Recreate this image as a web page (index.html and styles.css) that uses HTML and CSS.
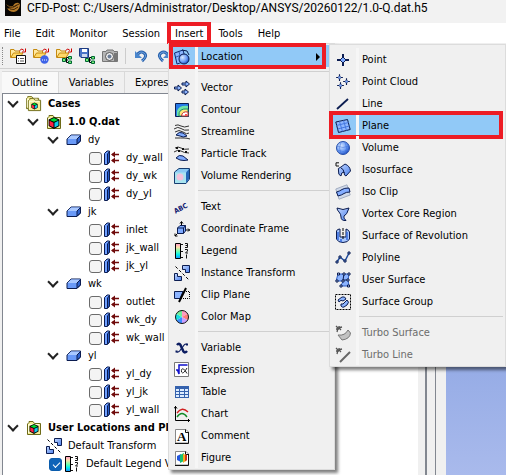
FILE: index.html
```
<!DOCTYPE html>
<html lang="en">
<head>
<meta charset="utf-8">
<title>CFD-Post</title>
<link rel="stylesheet" href="styles.css">
</head>

<body>

<!-- shared icons -->
<svg class="defs" width="0" height="0">
	<linearGradient id="rainbow" x1="0" y1="0" x2="0" y2="1">
		<stop offset="0" stop-color="#f9c"/><stop offset=".25" stop-color="#fda"/><stop offset=".5" stop-color="#7fa"/><stop offset=".75" stop-color="#0ee"/><stop offset="1" stop-color="#28f"/>
	</linearGradient>
	<linearGradient id="blue" x1="0" y1="0" x2="1" y2="1">
		<stop offset="0" stop-color="#c5d9ff"/><stop offset="1" stop-color="#4a80ee"/>
	</linearGradient>
	<radialGradient id="ball" cx=".35" cy=".35" r=".7">
		<stop offset="0" stop-color="#d8e8ff"/><stop offset=".6" stop-color="#6d9df5"/><stop offset="1" stop-color="#1c4cc0"/>
	</radialGradient>
	<symbol id="cube" viewBox="0 0 10 10">
		<path d="M5 0L9.500 2V7.500L5 10L.5 7.500V2Z" fill="#000"/>
		<path d="M5 .8L8.500 2.400L5 4L1.500 2.400Z" fill="#0d3"/><path d="M1.300 3.200L4.600 4.700V8.800L1.300 7Z" fill="#f24"/><path d="M5.400 4.700L8.700 3.200V7L5.400 8.800Z" fill="#1ce"/>
	</symbol>
	<symbol id="folder" viewBox="0 0 16 16">
		<path d="M1.500 14.500V4L3 2.500V1.500H7L8.500 3.500H14.500V14.500Z" fill="#f5ee96" stroke="#6d6a18"/>
		<path d="M2.500 13V4.500H13" fill="none" stroke="#fffde0"/>
	</symbol>
	<symbol id="open" viewBox="0 0 16 16">
		<path d="M.5 9.500V1.500H4L5 3H9.500V5" fill="#ffe9a0" stroke="#c58a10"/>
		<path d="M.8 9.500L3.500 5H13L10 9.500Z" fill="#ffd968" stroke="#c58a10"/>
		<path d="M9.500 2.500Q12 -.5 14 2.500M15.500 .5V4H12" fill="none" stroke="#c00"/>
	</symbol>
	<symbol id="nodes" viewBox="0 0 10 8">
		<path d="M3 4H6M4.500 4V1.500H6M4.500 4V6.500H6" fill="none" stroke="#000"/>
		<path d="M.5 2.500H3.500V5.500H.5ZM6.500 .5H9.500V3H6.500ZM6.500 5H9.500V7.500H6.500Z" fill="#7e7" stroke="#063"/>
	</symbol>
	<symbol id="box" viewBox="0 0 16 16">
		<path d="M1 7L5 3H14.500V9L11 12.500H1Z" fill="#6a9af8" stroke="#0b1c50"/><path d="M1.500 7L5 3.500H14L11 7Z" fill="#a9c8ff"/><path d="M11 12V7L14.500 3.500V9Z" fill="#2f62cc" stroke="#0b1c50"/>
	</symbol>
	<symbol id="bound" viewBox="0 0 16 16">
		<path d="M.5 3.500L3 1H5.500V12L3.500 14.500H.5Z" fill="#6f9fff" stroke="#0b1c50"/><path d="M3.500 14V4L5.500 1.500V12Z" fill="#245ac8" stroke="#0b1c50"/>
		<path d="M8 4.500H15M8 10.500H15" stroke="#700b0b" stroke-width="1.500"/><path d="M7 4.500L11 1.500V7.500ZM7 10.500L11 7.500V13.500Z" fill="#700b0b"/>
	</symbol>
	<symbol id="legend" viewBox="0 0 16 16">
		<path d="M1.500 .5H6.500V15.500H1.500Z" fill="url(#rainbow)" stroke="#000"/>
		<path d="M7 1.500H9M7 8.500H9M7 14.500H9M11 .5H13.500V4.500H11M11.500 2.500H13M11 6.500H13.500V8L11.500 10H14M12.500 11.500V15.500" fill="none" stroke="#111"/>
	</symbol>
	<symbol id="transform" viewBox="0 0 16 16">
		<path d="M8.500 .5H15.500V7.500H11.500V4.500H8.500Z" fill="url(#blue)" stroke="#0b1c50"/>
		<path d="M.5 8.500H3.500V11.500H7.500V15.500H.5Z" fill="url(#blue)" stroke="#0b1c50"/>
		<path d="M1.500 1.500L15 15" stroke="#000" stroke-dasharray="3 2"/>
	</symbol>
	<symbol id="page" viewBox="0 0 16 16">
		<path d="M1.500 1.500H12L14.500 4V15H1.500Z" fill="#fff" stroke="#888"/><path d="M14.500 4V15.500H1M11.500 1.500V4.500H14.500" fill="none" stroke="#111"/>
	</symbol>
	<symbol id="diamond" viewBox="0 0 16 16">
		<path d="M8 2V14M2 8H14" stroke="#0b1c50" stroke-width="2"/><path d="M8 5L11 8L8 11L5 8Z" fill="#7eaaff" stroke="#0b1c50"/>
	</symbol>
	<symbol id="fan" viewBox="0 0 8 8">
		<path d="M1 1L3 3L7 2M3 3L2 7M4 3L6 5M1 4H4M4 1V4" fill="none" stroke="#555" stroke-width="1.300"/>
	</symbol>
</svg>

<header class="titlebar">
	<svg class="logo" viewBox="0 0 16 16"><path d="M0 0H16V16H0Z" fill="#080604"/><path d="M1 4Q4 7 8 6Q10 2 14 3L15 5Q14 11 9 12Q4 12 2 8Q4 9 6 8Q3 7 1 4Z" fill="#b47a28"/><path d="M3 6Q7 9 12 5M5 9Q9 11 13 7M8 7L14 4" fill="none" stroke="#3d2408"/></svg>
	<h1>CFD-Post: C:/Users/Administrator/Desktop/ANSYS/20260122/1.0-Q.dat.h5</h1>
</header>

<nav class="menubar">
	<button type="button">File</button>
	<button type="button">Edit</button>
	<button type="button">Monitor</button>
	<button type="button">Session</button>
	<div class="dropdown">
		<button type="button" class="marked" aria-expanded="true">Insert</button>
		<ul class="menu">
			<li class="active">
				<button type="button" class="marked">
					<svg class="icon" viewBox="0 0 16 16"><path d="M.5 4L9 1L12 12L3 15Z" fill="#8db6ff" stroke="#0b2a70"/><path d="M5 3L8 13M2 8L10 5" stroke="#2d5cb8"/><path d="M8 1L13 2L15 6" fill="none" stroke="#0b1c50"/><circle cx="10" cy="10" r="5" fill="url(#ball)" stroke="#0b1c50"/></svg>
					Location <span class="arrow"></span>
				</button>
				<ul class="menu submenu">
					<li><button type="button"><svg class="icon"><use href="#diamond"/></svg>Point</button></li>
					<li><button type="button"><svg class="icon" viewBox="0 0 16 16"><use href="#diamond" x="0" y="-1" width="9" height="9"/><use href="#diamond" x="7" y="3" width="9" height="9"/><use href="#diamond" x="1" y="7" width="9" height="9"/></svg>Point Cloud</button></li>
					<li><button type="button"><svg class="icon" viewBox="0 0 16 16"><path d="M2 13L13 3" stroke="#0b1c50" stroke-width="1.800"/></svg>Line</button></li>
					<li class="active"><button type="button" class="marked"><svg class="icon" viewBox="0 0 16 16"><path d="M.8 4L12.500 1.500L15.200 11.500L3.500 14.500Z" fill="#8eb7ff" stroke="#0b1c50"/><path d="M1.500 7.500L13.500 4.500M2.500 11L14.500 8M4.500 3.500L7.500 13.500M8.500 2.500L11.500 12.500" stroke="#4477e0"/></svg>Plane</button></li>
					<li><button type="button"><svg class="icon" viewBox="0 0 16 16"><circle cx="8" cy="8" r="6.500" fill="url(#ball)" stroke="#2850a8"/><path d="M2 6Q8 9 14 6M2 10Q8 13 14 10M6 2Q3 8 6 14M10 2Q13 8 10 14" fill="none" stroke="#3e70d8" stroke-width=".5"/></svg>Volume</button></li>
					<li><button type="button"><svg class="icon" viewBox="0 0 16 16"><path d="M4 .8H1V4H4" fill="none" stroke="#111"/><path d="M3.500 9Q2 6 6 5L10 2Q15 4 15.500 9L11 14Q9 14 9 10Q6 10 6 14Q3 13 3.500 9Z" fill="url(#blue)" stroke="#0b1c50"/><path d="M6 6Q9 7 9 11" fill="none" stroke="#0b1c50"/></svg>Isosurface</button></li>
					<li><button type="button"><svg class="icon" viewBox="0 0 16 16"><path d="M.8 5L12 .8L15.200 11L4 15.200Z" fill="#cfd9ea" stroke="#a3adc0"/><path d="M1.500 8Q5 7 7 5.500T14 4L15 8Q11 8 9 9.500T3 12Z" fill="#84adff" stroke="#0b1c50"/></svg>Iso Clip</button></li>
					<li><button type="button"><svg class="icon" viewBox="0 0 16 16"><path d="M2 2Q8 5 14 2Q12 9 9 10Q8 12 11 14.500Q6 15 6 11Q6 8 4 6Q2 4 2 2Z" fill="url(#blue)" stroke="#0b1c50"/></svg>Vortex Core Region</button></li>
					<li><button type="button"><svg class="icon" viewBox="0 0 16 16"><path d="M1.500 3Q2 1 5 1V9H11V1Q14 2 14.500 4V11Q13 14.500 8 14.500T1.500 11Z" fill="#a9c8ff" stroke="#0b1c50"/><path d="M3 4V12M12 4V12M6 11V14" stroke="#356ade" stroke-width="1.500"/><path d="M8 0V12" stroke="#000" stroke-dasharray="3 1"/></svg>Surface of Revolution</button></li>
					<li><button type="button"><svg class="icon" viewBox="0 0 16 16"><path d="M2 12L5 7L10 11L14 3" fill="none" stroke="#1e4a9c" stroke-width="1.500"/><path d="M1 11H3V13H1ZM4 6H6V8H4ZM9 10H11V12H9ZM13 2H15V4H13Z" fill="#8cb4ff" stroke="#0b1c50"/></svg>Polyline</button></li>
					<li><button type="button"><svg class="icon" viewBox="0 0 16 16"><path d="M3 2H14L13 8L14 14H6L8 9H1Z" fill="#8cb4ff" stroke="#2c5dc4"/><path d="M9 2L8 8H13" fill="none" stroke="#0b1c50"/><path d="M2.500 1H4.500V3H2.500ZM8 1H10V3H8ZM13 1H15V3H13ZM1 8H3V10H1ZM7 8H9V10H7ZM12 7H14V9H12ZM5 13H7V15H5ZM12.500 13H14.500V15H12.500Z" fill="#d4e3ff" stroke="#0b1c50"/></svg>User Surface</button></li>
					<li><button type="button"><svg class="icon" viewBox="0 0 16 16"><path d="M.5 .5H15.500V15.500H.5Z" fill="none" stroke="#000" stroke-dasharray="2 1"/><path d="M3 6L7 3Q10 2 11 5L8 7Q6 5 4 8ZM6 12Q5 9 8 10L12 6Q15 8 12 11L9 13Q8 14 6 12Z" fill="#8cb4ff" stroke="#0b1c50"/></svg>Surface Group</button></li>
					<li class="separator"></li>
					<li><button type="button" disabled><svg class="icon" viewBox="0 0 16 16"><use href="#fan" width="8" height="8"/><path d="M3 10Q10 11 13 5L15.500 8Q15 14 7 15Z" fill="#c2c2c2" stroke="#777"/></svg>Turbo Surface</button></li>
					<li><button type="button" disabled><svg class="icon" viewBox="0 0 16 16"><use href="#fan" width="8" height="8"/><path d="M5 15L15 5" stroke="#666" stroke-width="2"/></svg>Turbo Line</button></li>
				</ul>
			</li>
			<li class="separator"></li>
			<li><button type="button"><svg class="icon" viewBox="0 0 16 16"><path d="M.5 7H4V5L7.500 8L4 11V9H.5ZM8 3H12V1L15.500 4L12 7V5H8ZM8 11H11V9L14.500 12L11 15V13H8Z" fill="#8cb4ff" stroke="#0b1c50"/></svg>Vector</button></li>
			<li><button type="button"><svg class="icon" viewBox="0 0 16 16"><path d="M1.500 1.500H14.500V14.500H1.500Z" fill="#2479e8" stroke="#0b1c50"/><path d="M3 14V9Q5 3 14 4V14Z" fill="#6ee3a8"/><path d="M5 14Q4 6 14 7V14Z" fill="#ffe87a" stroke="#138b6a"/><path d="M7.500 14Q8 9 14 10V14Z" fill="#fff" stroke="#c03030"/><path d="M11 12H13V14H11Z" fill="#f55"/></svg>Contour</button></li>
			<li><button type="button"><svg class="icon" viewBox="0 0 16 16"><path d="M1 1.500Q4 0 7 2T15 2M0 5Q4 2 7 4.500T15 6M1 8Q5 5 9 8T15 9M1 14Q7 14 10 14T16 15" fill="none" stroke="#333"/><path d="M2 11Q5 7 9 9L13 12Q9 14 6 12Z" fill="#7eaaff" stroke="#0b1c50"/></svg>Streamline</button></li>
			<li><button type="button"><svg class="icon" viewBox="0 0 16 16"><path d="M1 2Q4 0 7 2T15 3M0 6Q4 3 7 5T15 7" fill="none" stroke="#333"/><path d="M2 1H4V3H2ZM8 2H10V4H8ZM4 4H6V6H4ZM11 5H13V7H11Z" fill="#111"/><path d="M2 12Q5 8 9 10L14 14Q10 15 6 14Z" fill="#7eaaff" stroke="#0b1c50"/></svg>Particle Track</button></li>
			<li><button type="button"><svg class="icon" viewBox="0 0 16 16"><path d="M.5 4L5 .5H15.500V11L12 15.500H.5Z" fill="#8ccaf5" stroke="#173d70"/><path d="M1 4.500H12V15H1Z" fill="#a9e4f0"/><path d="M12 4.500L15 1V11L12 15Z" fill="#2466b8"/><circle cx="6" cy="9" r="3.500" fill="#f3c3dc"/></svg>Volume Rendering</button></li>
			<li class="separator"></li>
			<li><button type="button"><svg class="icon abc" viewBox="0 0 16 16"><text x="-1" y="11" transform="rotate(-28 8 8)">ABC</text></svg>Text</button></li>
			<li><button type="button"><svg class="icon" viewBox="0 0 16 16"><path d="M7.500 5V1M12 9H16M4 12L1 15M6 2.500L7.500 .5L9 2.500M14 7.500L15.500 9L14 10.500M1 12.500V15H3.500" fill="none" stroke="#000"/><path d="M3.500 7L6 4.500H11.500V10L9.500 12.500H3.500Z" fill="#7eaaff" stroke="#0b1c50"/><path d="M3.500 7H9.500V12.500M9.500 7L11.500 4.500" fill="none" stroke="#0b1c50"/></svg>Coordinate Frame</button></li>
			<li><button type="button"><svg class="icon"><use href="#legend"/></svg>Legend</button></li>
			<li><button type="button"><svg class="icon"><use href="#transform"/></svg>Instance Transform</button></li>
			<li><button type="button"><svg class="icon" viewBox="0 0 16 16"><path d="M.5 4.500H9L6 11.500H.5Z" fill="#8cb4ff" stroke="#0b1c50"/><path d="M10 4.500H15.500V11.500H7" fill="none" stroke="#000" stroke-dasharray="1 1"/><path d="M5 15L12 1" stroke="#000" stroke-width="2"/></svg>Clip Plane</button></li>
			<li><button type="button"><svg class="icon" viewBox="0 0 16 16"><circle cx="8" cy="8" r="6.500" fill="#fff"/><path d="M8 8V1.500A6.500 6.500 0 0 1 13.600 4.700Z" fill="#ff9ac0"/><path d="M8 8L13.600 4.700A6.500 6.500 0 0 1 13.600 11.300Z" fill="#ff7b7b"/><path d="M8 8L13.600 11.300A6.500 6.500 0 0 1 8 14.500Z" fill="#c6a0ff"/><path d="M8 8V14.500A6.500 6.500 0 0 1 2.400 11.300Z" fill="#3a8cff"/><path d="M8 8L2.400 11.300A6.500 6.500 0 0 1 2.400 4.700Z" fill="#19e0e0"/><path d="M8 8L2.400 4.700A6.500 6.500 0 0 1 8 1.500Z" fill="#70ee98"/><circle cx="8" cy="8" r="6.500" fill="none" stroke="#111"/></svg>Color Map</button></li>
			<li class="separator"></li>
			<li><button type="button"><svg class="icon" viewBox="0 0 16 16"><path d="M3 5Q5 2.500 6.500 5L9.500 11.500Q11 13.500 13 11" fill="none" stroke="#0b1c60" stroke-width="2.500"/><path d="M13 4.500Q11 3 9 6.500L6 10.500Q4 13 2.500 11.500" fill="none" stroke="#0b1c60" stroke-width="1.200"/><path d="M12 3.500H14V5.500H12ZM1.500 10.500H3.500V12.500H1.500Z" fill="#0b1c60"/></svg>Variable</button></li>
			<li><button type="button"><svg class="icon" viewBox="0 0 16 16"><path d="M.5 .5H14.500V14.500H.5Z" fill="#fff" stroke="#777"/><path d="M2 8L3.500 8L5 12V3H13.500" fill="none" stroke="#11c" stroke-width="1.500"/><path d="M13 6Q9 13 7.500 10Q7 6 9.500 7Q11 8 13 11.500" fill="none" stroke="#222"/></svg>Expression</button></li>
			<li><button type="button"><svg class="icon" viewBox="0 0 16 16"><path d="M1 2H15V14H1Z" fill="#3562ad"/><path d="M2 5H5V7H2ZM6 5H10V7H6ZM11 5H14V7H11ZM2 8H5V10H2ZM6 8H10V10H6ZM11 8H14V10H11ZM2 11H5V13H2ZM6 11H10V13H6ZM11 11H14V13H11Z" fill="#dcecff"/></svg>Table</button></li>
			<li><button type="button"><svg class="icon" viewBox="0 0 16 16"><path d="M1.500 0V14.500H16M0 2.500L1.500 .5L3 2.500M14 13L15.500 14.500L14 16" fill="none" stroke="#000"/><path d="M3 7Q8 0 14 6" fill="none" stroke="#d02020" stroke-width="1.300"/><path d="M3 11Q8 4 13 11" fill="none" stroke="#128a28" stroke-width="1.300"/></svg>Chart</button></li>
			<li><button type="button"><svg class="icon comment" viewBox="0 0 16 16"><use href="#page"/><text x="3" y="13">A</text></svg>Comment</button></li>
			<li><button type="button"><svg class="icon" viewBox="0 0 16 16"><use href="#page"/><path d="M3 6L7 4V12L3 10Z" fill="#2255dd"/><path d="M6 5L10 3V11L6 13Z" fill="#18c070"/><path d="M9 4L13 5V10L9 13Z" fill="#f0b020"/><path d="M11 4.500L13 5V10L11 11.500Z" fill="#d83018"/></svg>Figure</button></li>
		</ul>
	</div>
	<button type="button">Tools</button>
	<button type="button">Help</button>
</nav>

<div class="toolbar">
	<span class="grip"></span>
	<button type="button" aria-label="Load results"><svg class="icon" viewBox="0 0 16 16"><use href="#open" width="16" height="16"/><path d="M6.500 7.500H15.500V15.500H6.500Z" fill="#fff" stroke="#111"/><path d="M8 10.500H9M10 10.500H14M8 13H9M10 13H14" stroke="#555"/></svg></button>
	<button type="button" aria-label="Load state"><svg class="icon" viewBox="0 0 16 16"><use href="#open" width="16" height="16"/><circle cx="11.500" cy="11.500" r="4.200" fill="#3d63e8"/><path d="M9 12H10M11 12H12M13 12H14" stroke="#fff"/></svg></button>
	<button type="button" aria-label="Open session"><svg class="icon" viewBox="0 0 16 16"><use href="#open" width="16" height="16"/><use href="#nodes" x="6" y="8" width="10" height="8"/></svg></button>
	<button type="button" aria-label="Save state"><svg class="icon" viewBox="0 0 16 16"><path d="M.5 .5H9.500V9.500H2L.5 8Z" fill="#4a74c8" stroke="#1d3a80"/><path d="M3 1H8V4H3Z" fill="#fff"/><path d="M3 6H8V9H3Z" fill="#cdd8ee"/><use href="#nodes" x="6" y="8" width="10" height="8"/></svg></button>
	<button type="button" aria-label="Snapshot"><svg class="icon" viewBox="0 0 16 16"><path d="M.5 3.500H4L5 2H11L12 3.500H15.500V13.500H.5Z" fill="#b5b5b5" stroke="#777"/><path d="M12 5H15V13H12Z" fill="#777"/><circle cx="7.500" cy="8.500" r="4" fill="#eee" stroke="#555"/><circle cx="7.500" cy="8.500" r="2" fill="#6b7c96"/></svg></button>
	<span class="divider"></span>
	<button type="button" aria-label="Undo"><svg class="icon" viewBox="0 0 16 16"><path d="M3.500 8Q7 2 11 5T9 13" fill="none" stroke="#2b63ad" stroke-width="3"/><path d="M3.500 8Q7 2 11 5T9 13" fill="none" stroke="#6da2e0"/><path d="M2 3V10H9Z" fill="#4a86cc"/></svg></button>
	<button type="button" aria-label="Redo"><svg class="icon" viewBox="0 0 16 16"><path d="M12.500 8Q9 2 5 5T7 13" fill="none" stroke="#2b63ad" stroke-width="3"/><path d="M12.500 8Q9 2 5 5T7 13" fill="none" stroke="#6da2e0"/><path d="M14 3V10H7Z" fill="#4a86cc"/></svg></button>
</div>

<main class="workspace">
	<section class="dock">
		<div class="tabs">
			<button type="button" class="selected">Outline</button>
			<button type="button">Variables</button>
			<button type="button">Expressions</button>
		</div>
		<ul class="tree">
			<li>
				<div class="row strong"><span class="chevron"></span><svg class="icon" viewBox="0 0 16 16"><use href="#folder" x="-1" y="-1" width="15" height="15"/><use href="#folder" x="1" y="1" width="15" height="15"/><use href="#cube" x="5" y="6" width="7" height="8"/></svg>Cases</div>
				<ul>
					<li>
						<div class="row strong"><span class="chevron"></span><svg class="icon" viewBox="0 0 16 16"><use href="#folder" width="16" height="16"/><use href="#cube" x="2" y="3" width="12" height="12"/></svg>1.0 Q.dat</div>
						<ul>
							<li>
								<div class="row"><span class="chevron"></span><svg class="icon"><use href="#box"/></svg>dy</div>
								<ul>
									<li><label class="row leaf"><input type="checkbox"><svg class="icon"><use href="#bound"/></svg>dy_wall</label></li>
									<li><label class="row leaf"><input type="checkbox"><svg class="icon"><use href="#bound"/></svg>dy_wk</label></li>
									<li><label class="row leaf"><input type="checkbox"><svg class="icon"><use href="#bound"/></svg>dy_yl</label></li>
								</ul>
							</li>
							<li>
								<div class="row"><span class="chevron"></span><svg class="icon"><use href="#box"/></svg>jk</div>
								<ul>
									<li><label class="row leaf"><input type="checkbox"><svg class="icon"><use href="#bound"/></svg>inlet</label></li>
									<li><label class="row leaf"><input type="checkbox"><svg class="icon"><use href="#bound"/></svg>jk_wall</label></li>
									<li><label class="row leaf"><input type="checkbox"><svg class="icon"><use href="#bound"/></svg>jk_yl</label></li>
								</ul>
							</li>
							<li>
								<div class="row"><span class="chevron"></span><svg class="icon"><use href="#box"/></svg>wk</div>
								<ul>
									<li><label class="row leaf"><input type="checkbox"><svg class="icon"><use href="#bound"/></svg>outlet</label></li>
									<li><label class="row leaf"><input type="checkbox"><svg class="icon"><use href="#bound"/></svg>wk_dy</label></li>
									<li><label class="row leaf"><input type="checkbox"><svg class="icon"><use href="#bound"/></svg>wk_wall</label></li>
								</ul>
							</li>
							<li>
								<div class="row"><span class="chevron"></span><svg class="icon"><use href="#box"/></svg>yl</div>
								<ul>
									<li><label class="row leaf"><input type="checkbox"><svg class="icon"><use href="#bound"/></svg>yl_dy</label></li>
									<li><label class="row leaf"><input type="checkbox"><svg class="icon"><use href="#bound"/></svg>yl_jk</label></li>
									<li><label class="row leaf"><input type="checkbox"><svg class="icon"><use href="#bound"/></svg>yl_wall</label></li>
								</ul>
							</li>
						</ul>
					</li>
				</ul>
			</li>
			<li>
				<div class="row strong"><span class="chevron"></span><svg class="icon" viewBox="0 0 16 16"><use href="#folder" width="16" height="16"/><use href="#cube" x="3" y="4" width="10" height="10"/></svg>User Locations and Plots</div>
				<ul>
					<li><div class="row leaf"><svg class="icon"><use href="#transform"/></svg>Default Transform</div></li>
					<li><label class="row leaf"><input type="checkbox" checked><svg class="icon"><use href="#legend"/></svg>Default Legend View 1</label></li>
				</ul>
			</li>
		</ul>
	</section>
	<section class="viewer">
		<div class="viewport"></div>
	</section>
</main>

</body>
</html>
```
FILE: styles.css
```
* { box-sizing:border-box; }
body {
	display:flex;
	flex-direction:column;
	min-height:100vh;
	margin:0;
	overflow:hidden;
	background-color:#f0f0f0;
	color:#000;
	font:11px/18px Tahoma, "DejaVu Sans Condensed", "DejaVu Sans", sans-serif;
}
ul { margin:0; padding:0; list-style:none; }
button {
	padding:0;
	border:0;
	background:none;
	color:inherit;
	font:inherit;
	white-space:nowrap;
}
.defs { position:absolute; }
.icon { flex:none; width:16px; height:16px; }

/* title */
.titlebar {
	display:flex;
	align-items:center;
	gap:6px;
	height:23px;
	padding:0 5px 8px;
	background-color:#f2f2f2;
}
.logo { flex:none; width:16px; height:16px; }
.titlebar h1 {
	margin:0;
	font:12px/16px "Segoe UI", Roboto, sans-serif;
	white-space:nowrap;
}

/* menu bar */
.menubar {
	display:flex;
	gap:1px;
	height:20px;
	background-color:#fff;
}
.menubar > button { padding:2px 7px 0; }
.menubar > button:first-child { padding-left:4px; }
.dropdown { position:relative; }
.dropdown > button { height:20px; padding:2px 7px 0; }
.marked { outline:4px solid #ed1c24; outline-offset:-3px; }

/* drop-down menus */
.menu {
	position:absolute;
	top:20px;
	left:0;
	z-index:1;
	width:167px;
	padding:1px 2px;
	border:1px solid #dcdcdc;
	background-color:#f0f0f0;
	box-shadow:3px 3px 3px rgba(0,0,0,.5);
}
.menu li {
	position:relative;
	background:linear-gradient(#f6f6f6, #f6f6f6) 24px 0 / 3px 100% no-repeat;
}
.menu li.active { background-color:#91c9f7; }
.menu li button {
	display:flex;
	align-items:center;
	gap:11px;
	width:100%;
	height:22px;
	padding:1px 0 0 3px;
}
.menu li .marked {
	width:calc(100% - 8px);
	outline-offset:-2px;
}
.menu button:disabled { color:#6d6d6d; }
.menu .separator { height:9px; }
.menu .separator::before {
	content:"";
	display:block;
	height:4px;
	margin-left:27px;
	border-bottom:1px solid #d0d0d0;
}
.arrow {
	margin-left:auto;
	margin-right:4px;
	border:4px solid transparent;
	border-left-color:#000;
	border-right:0;
}
.submenu {
	top:-1px;
	left:100%;
	width:177px;
	margin-left:-3px;
	padding:3px 2px 1px;
}
.menu .submenu .marked {
	width:calc(100% - 3px);
	outline-offset:-1px;
}
.abc text { fill:#101a70; font:bold 7px "DejaVu Sans Condensed", sans-serif; }
.comment text { font:bold 13px "Liberation Serif", serif; }

/* tool bar */
.toolbar {
	display:flex;
	align-items:center;
	gap:7px;
	height:26px;
	padding-left:2px;
	border-bottom:1px solid #d0d0d0;
}
.toolbar button { height:16px; }
.toolbar .icon { display:block; }
.grip {
	width:1px;
	height:18px;
	border-left:1px dotted #888;
}
.divider { width:1px; height:16px; background-color:#ccc; }

/* workspace */
.workspace { display:flex; flex:1; }
.dock {
	display:flex;
	flex:0 0 86%;
	flex-direction:column;
	padding:2px 8px 0 2px;
}
.tabs { display:flex; height:22px; }
.tabs button {
	padding:0 10px;
	border:1px solid #d9d9d9;
	border-width:1px 1px 0 0;
}
.tabs .selected { background-color:#f9f9f9; }
.tree {
	flex:1;
	padding:1px 0 2px 5px;
	border:1px solid #828790;
	border-width:1px 2px 0 1px;
	background:linear-gradient(#f0f0f0, #f0f0f0) right / 7px 100% no-repeat #fff;
}
.tree ul { padding-left:20px; }
.row {
	display:flex;
	align-items:center;
	height:18px;
	white-space:nowrap;
}
.row .icon { margin-right:6px; }
.strong { font-weight:bold; }
.leaf { padding-left:18px; }
.chevron { width:18px; }
.chevron::before {
	content:"";
	display:block;
	width:6px;
	height:6px;
	margin:-4px 0 0 1px;
	border:1px solid #222;
	border-width:0 2px 2px 0;
	transform:rotate(45deg);
}
.row input {
	flex:none;
	appearance:none;
	width:13px;
	height:13px;
	margin:0 2px 0 3px;
	border:1px solid #6b6b6b;
	border-radius:3px;
	background-color:#f4f4f4;
}
.row input:checked { border-color:#0a5cad; background-color:#0f64b8; }
.row input:checked::before {
	content:"";
	display:block;
	width:6px;
	height:3px;
	margin:3px 0 0 3px;
	border:1px solid #fff;
	border-width:0 0 1px 1px;
	transform:rotate(-45deg);
}
.viewer {
	display:flex;
	flex:1;
	padding-left:10px;
	border-left:1px solid #828790;
}
.viewport { flex:1; background:linear-gradient(#6286d5, #a9baec); }
```
